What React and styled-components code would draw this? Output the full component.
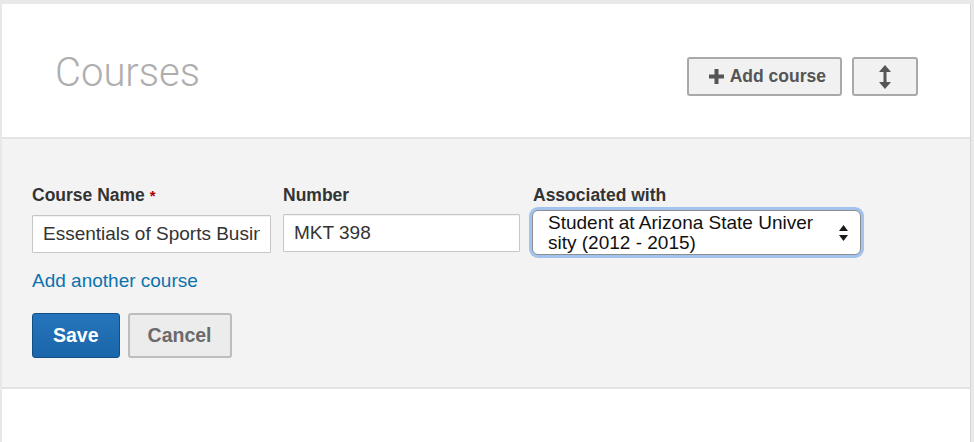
import React from "react";
import styled, { createGlobalStyle } from "styled-components";

const Global = createGlobalStyle`
  html, body { margin: 0; padding: 0; background: #e8e8e8; }
  body { font-family: "Liberation Sans", Arial, Helvetica, sans-serif; }
  * { box-sizing: border-box; }
`;

const Page = styled.div`
  padding: 4px 3px 0 2px;
  height: 442px;
  overflow: hidden;
`;

const Card = styled.section`
  background: #fff;
  height: 100%;
  border-right: 1px solid #d6d6d6;
`;

const Header = styled.header`
  height: 135px;
  display: flex;
  align-items: flex-start;
  justify-content: space-between;
  padding: 53px 52px 0 53px;
  border-bottom: 2px solid #e4e4e4;
`;

const Title = styled.h2`
  margin: -4px 0 0;
  font-family: Roboto, "Liberation Sans", sans-serif;
  font-weight: 300;
  font-size: 40px;
  line-height: 40px;
  color: #aeaeae;
`;

const Tools = styled.div`
  display: flex;
  gap: 10px;
`;

const ToolButton = styled.button`
  height: 39px;
  min-width: ${(p) => p.$minWidth || "auto"};
  display: flex;
  align-items: center;
  justify-content: center;
  gap: 6px;
  padding: ${(p) => p.$pad || "0"};
  background: #f1f1f1;
  border: 2px solid #a9a9a9;
  border-radius: 3px;
  font-family: "Liberation Sans", Arial, sans-serif;
  font-weight: 700;
  font-size: 17.5px;
  color: #555;
  cursor: pointer;
`;

const Form = styled.div`
  background: #f3f3f3;
  padding: 46px 30px 29px;
  border-bottom: 2px solid #e4e4e4;
`;

const Row = styled.div`
  display: flex;
  align-items: flex-start;
`;

const Field = styled.div`
  width: ${(p) => p.$w}px;
  margin-right: ${(p) => p.$mr || 0}px;
  display: flex;
  flex-direction: column;
`;

const Label = styled.label`
  font-weight: 700;
  font-size: 17.5px;
  line-height: 20px;
  color: #333;
  margin-bottom: ${(p) => p.$mb}px;
  padding-left: ${(p) => p.$pl || 0}px;
`;

const Req = styled.span`
  color: #a00;
  font-size: 15px;
`;

const TextInput = styled.input`
  width: 100%;
  height: 38px;
  padding: 0 10px;
  border: 1px solid #c6c6c6;
  border-radius: 1px;
  box-shadow: inset 0 1px 1px rgba(0, 0, 0, 0.06);
  background: #fff;
  font-family: "Liberation Sans", Arial, sans-serif;
  font-size: 19px;
  color: #333;
  outline: none;
`;

const SelectBox = styled.div`
  margin: 3px;
  height: 45px;
  display: flex;
  align-items: center;
  justify-content: space-between;
  padding: 0 12px 0 15px;
  background: #fff;
  border: 1px solid #8e8e8e;
  border-radius: 6px;
  box-shadow: 0 0 0 3px #a2c3ee;
`;

const SelectText = styled.div`
  font-size: 19px;
  line-height: 20px;
  color: #111;
  span { display: block; }
`;

const Link = styled.a`
  display: inline-block;
  margin-top: 12px;
  font-size: 19px;
  line-height: 22px;
  color: #0b72ad;
  text-decoration: none;
`;

const Actions = styled.div`
  display: flex;
  gap: 8px;
  margin-top: 21px;
`;

const ActionButton = styled.button`
  height: 45px;
  padding: 0 ${(p) => p.$px}px;
  border-radius: 3px;
  font-family: "Liberation Sans", Arial, sans-serif;
  font-weight: 700;
  font-size: 19.5px;
  cursor: pointer;
  ${(p) =>
    p.$primary
      ? `background: linear-gradient(#2574bb, #1b66aa); border: 1px solid #124f84; color: #fff;`
      : `background: #ececec; border: 2px solid #bdbdbd; color: #6a6a6a;`}
`;

const PlusIcon = () => (
  <svg width="15" height="15" viewBox="0 0 15 15">
    <rect x="0" y="5.5" width="15" height="4" fill="#555" />
    <rect x="5.5" y="0" width="4" height="15" fill="#555" />
  </svg>
);

const UpDownIcon = () => (
  <svg width="12" height="24" viewBox="0 0 12 24">
    <polygon points="6,0 12,7 0,7" fill="#555" />
    <rect x="4.5" y="6" width="3" height="12" fill="#555" />
    <polygon points="6,24 12,17 0,17" fill="#555" />
  </svg>
);

const SelectArrows = () => (
  <svg width="9" height="16" viewBox="0 0 9 16">
    <polygon points="4.5,0 9,6 0,6" fill="#1a1a1a" />
    <polygon points="4.5,16 9,10 0,10" fill="#1a1a1a" />
  </svg>
);

export default function App() {
  return (
    <>
      <Global />
      <Page>
        <Card>
          <Header>
            <Title>Courses</Title>
            <Tools>
              <ToolButton $pad="0 14px 0 20px">
                <PlusIcon />
                Add course
              </ToolButton>
              <ToolButton $minWidth="66px">
                <UpDownIcon />
              </ToolButton>
            </Tools>
          </Header>
          <Form>
            <Row>
              <Field $w={239} $mr={12}>
                <Label $mb={9}>
                  Course Name <Req>*</Req>
                </Label>
                <TextInput defaultValue="Essentials of Sports Business" />
              </Field>
              <Field $w={237} $mr={9}>
                <Label $mb={9}>Number</Label>
                <TextInput defaultValue="MKT 398" />
              </Field>
              <Field $w={335}>
                <Label $mb={2} $pl={4}>Associated with</Label>
                <SelectBox>
                  <SelectText>
                    <span>Student at Arizona State Univer</span>
                    <span>sity (2012 - 2015)</span>
                  </SelectText>
                  <SelectArrows />
                </SelectBox>
              </Field>
            </Row>
            <Link href="#">Add another course</Link>
            <Actions>
              <ActionButton $primary $px={20}>Save</ActionButton>
              <ActionButton $px={18}>Cancel</ActionButton>
            </Actions>
          </Form>
        </Card>
      </Page>
    </>
  );
}
